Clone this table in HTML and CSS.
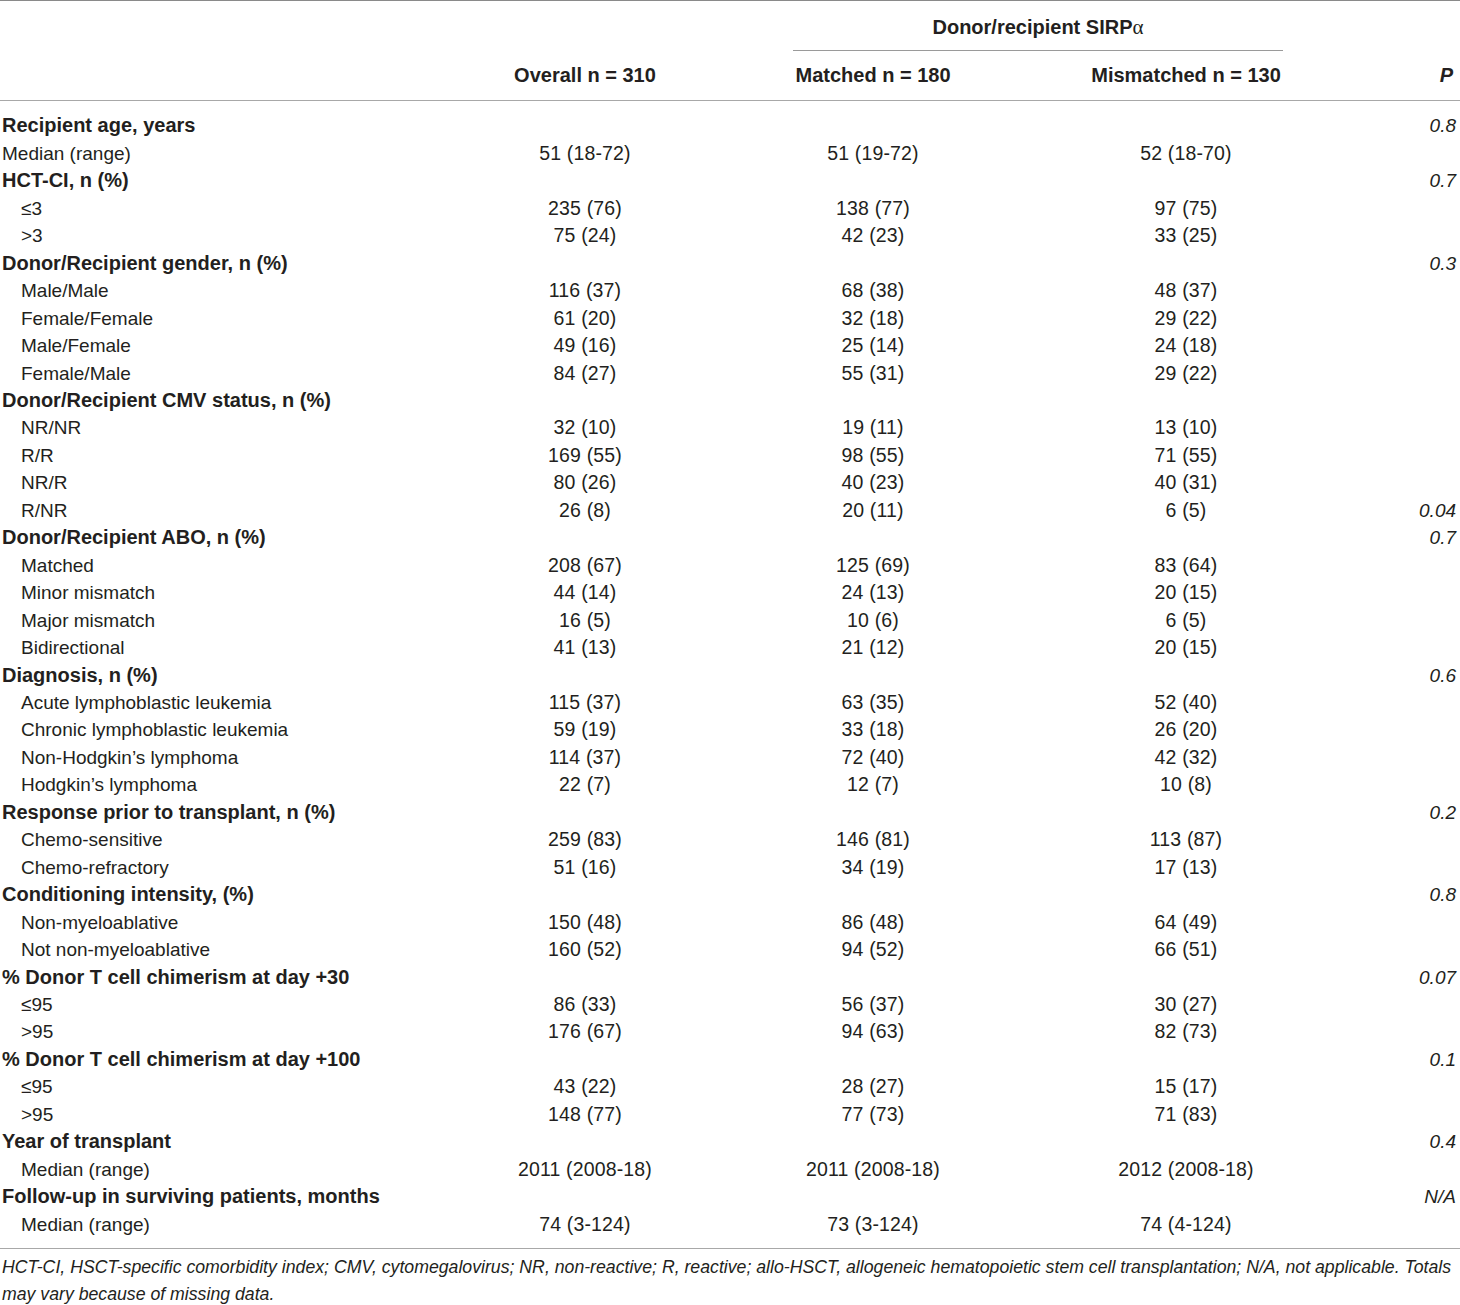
FILE: index.html
```html
<!DOCTYPE html>
<html lang="en">
<head>
<meta charset="utf-8">
<title>Patient characteristics</title>
<link rel="stylesheet" href="styles.css">
</head>
<body>
<table class="tbl">
  <colgroup>
    <col class="c-label">
    <col class="c-overall">
    <col class="c-matched">
    <col class="c-mism">
    <col class="c-p">
  </colgroup>
  <thead>
    <tr class="hrow1">
      <th></th>
      <th></th>
      <th colspan="2" class="span-h"><div class="span-inner">Donor/recipient SIRP<span class="alpha">α</span></div></th>
      <th></th>
    </tr>
    <tr class="hrow2">
      <th></th>
      <th class="num">Overall n = 310</th>
      <th class="num">Matched n = 180</th>
      <th class="num">Mismatched n = 130</th>
      <th class="pv">P</th>
    </tr>
  </thead>
  <tbody>
    <tr class="first"><td class="grp">Recipient age, years</td><td></td><td></td><td></td><td class="pv">0.8</td></tr>
    <tr><td class="sub0">Median (range)</td><td class="num">51 (18-72)</td><td class="num">51 (19-72)</td><td class="num">52 (18-70)</td><td class="pv"></td></tr>
    <tr><td class="grp">HCT-CI, n (%)</td><td></td><td></td><td></td><td class="pv">0.7</td></tr>
    <tr><td class="sub">≤3</td><td class="num">235 (76)</td><td class="num">138 (77)</td><td class="num">97 (75)</td><td class="pv"></td></tr>
    <tr><td class="sub">&gt;3</td><td class="num">75 (24)</td><td class="num">42 (23)</td><td class="num">33 (25)</td><td class="pv"></td></tr>
    <tr><td class="grp">Donor/Recipient gender, n (%)</td><td></td><td></td><td></td><td class="pv">0.3</td></tr>
    <tr><td class="sub">Male/Male</td><td class="num">116 (37)</td><td class="num">68 (38)</td><td class="num">48 (37)</td><td class="pv"></td></tr>
    <tr><td class="sub">Female/Female</td><td class="num">61 (20)</td><td class="num">32 (18)</td><td class="num">29 (22)</td><td class="pv"></td></tr>
    <tr><td class="sub">Male/Female</td><td class="num">49 (16)</td><td class="num">25 (14)</td><td class="num">24 (18)</td><td class="pv"></td></tr>
    <tr><td class="sub">Female/Male</td><td class="num">84 (27)</td><td class="num">55 (31)</td><td class="num">29 (22)</td><td class="pv"></td></tr>
    <tr><td class="grp">Donor/Recipient CMV status, n (%)</td><td></td><td></td><td></td><td class="pv"></td></tr>
    <tr><td class="sub">NR/NR</td><td class="num">32 (10)</td><td class="num">19 (11)</td><td class="num">13 (10)</td><td class="pv"></td></tr>
    <tr><td class="sub">R/R</td><td class="num">169 (55)</td><td class="num">98 (55)</td><td class="num">71 (55)</td><td class="pv"></td></tr>
    <tr><td class="sub">NR/R</td><td class="num">80 (26)</td><td class="num">40 (23)</td><td class="num">40 (31)</td><td class="pv"></td></tr>
    <tr><td class="sub">R/NR</td><td class="num">26 (8)</td><td class="num">20 (11)</td><td class="num">6 (5)</td><td class="pv">0.04</td></tr>
    <tr><td class="grp">Donor/Recipient ABO, n (%)</td><td></td><td></td><td></td><td class="pv">0.7</td></tr>
    <tr><td class="sub">Matched</td><td class="num">208 (67)</td><td class="num">125 (69)</td><td class="num">83 (64)</td><td class="pv"></td></tr>
    <tr><td class="sub">Minor mismatch</td><td class="num">44 (14)</td><td class="num">24 (13)</td><td class="num">20 (15)</td><td class="pv"></td></tr>
    <tr><td class="sub">Major mismatch</td><td class="num">16 (5)</td><td class="num">10 (6)</td><td class="num">6 (5)</td><td class="pv"></td></tr>
    <tr><td class="sub">Bidirectional</td><td class="num">41 (13)</td><td class="num">21 (12)</td><td class="num">20 (15)</td><td class="pv"></td></tr>
    <tr><td class="grp">Diagnosis, n (%)</td><td></td><td></td><td></td><td class="pv">0.6</td></tr>
    <tr><td class="sub">Acute lymphoblastic leukemia</td><td class="num">115 (37)</td><td class="num">63 (35)</td><td class="num">52 (40)</td><td class="pv"></td></tr>
    <tr><td class="sub">Chronic lymphoblastic leukemia</td><td class="num">59 (19)</td><td class="num">33 (18)</td><td class="num">26 (20)</td><td class="pv"></td></tr>
    <tr><td class="sub">Non-Hodgkin’s lymphoma</td><td class="num">114 (37)</td><td class="num">72 (40)</td><td class="num">42 (32)</td><td class="pv"></td></tr>
    <tr><td class="sub">Hodgkin’s lymphoma</td><td class="num">22 (7)</td><td class="num">12 (7)</td><td class="num">10 (8)</td><td class="pv"></td></tr>
    <tr><td class="grp">Response prior to transplant, n (%)</td><td></td><td></td><td></td><td class="pv">0.2</td></tr>
    <tr><td class="sub">Chemo-sensitive</td><td class="num">259 (83)</td><td class="num">146 (81)</td><td class="num">113 (87)</td><td class="pv"></td></tr>
    <tr><td class="sub">Chemo-refractory</td><td class="num">51 (16)</td><td class="num">34 (19)</td><td class="num">17 (13)</td><td class="pv"></td></tr>
    <tr><td class="grp">Conditioning intensity, (%)</td><td></td><td></td><td></td><td class="pv">0.8</td></tr>
    <tr><td class="sub">Non-myeloablative</td><td class="num">150 (48)</td><td class="num">86 (48)</td><td class="num">64 (49)</td><td class="pv"></td></tr>
    <tr><td class="sub">Not non-myeloablative</td><td class="num">160 (52)</td><td class="num">94 (52)</td><td class="num">66 (51)</td><td class="pv"></td></tr>
    <tr><td class="grp">% Donor T cell chimerism at day +30</td><td></td><td></td><td></td><td class="pv">0.07</td></tr>
    <tr><td class="sub">≤95</td><td class="num">86 (33)</td><td class="num">56 (37)</td><td class="num">30 (27)</td><td class="pv"></td></tr>
    <tr><td class="sub">&gt;95</td><td class="num">176 (67)</td><td class="num">94 (63)</td><td class="num">82 (73)</td><td class="pv"></td></tr>
    <tr><td class="grp">% Donor T cell chimerism at day +100</td><td></td><td></td><td></td><td class="pv">0.1</td></tr>
    <tr><td class="sub">≤95</td><td class="num">43 (22)</td><td class="num">28 (27)</td><td class="num">15 (17)</td><td class="pv"></td></tr>
    <tr><td class="sub">&gt;95</td><td class="num">148 (77)</td><td class="num">77 (73)</td><td class="num">71 (83)</td><td class="pv"></td></tr>
    <tr><td class="grp">Year of transplant</td><td></td><td></td><td></td><td class="pv">0.4</td></tr>
    <tr><td class="sub">Median (range)</td><td class="num">2011 (2008-18)</td><td class="num">2011 (2008-18)</td><td class="num">2012 (2008-18)</td><td class="pv"></td></tr>
    <tr><td class="grp">Follow-up in surviving patients, months</td><td></td><td></td><td></td><td class="pv">N/A</td></tr>
    <tr class="last"><td class="sub">Median (range)</td><td class="num">74 (3-124)</td><td class="num">73 (3-124)</td><td class="num">74 (4-124)</td><td class="pv"></td></tr>
  </tbody>
</table>
<p class="foot">HCT-CI, HSCT-specific comorbidity index; CMV, cytomegalovirus; NR, non-reactive; R, reactive; allo-HSCT, allogeneic hematopoietic stem cell transplantation; N/A, not applicable. Totals may vary because of missing data.</p>
</body>
</html>
```

FILE: styles.css
```css
html, body {
  margin: 0;
  padding: 0;
  background: #ffffff;
}

body {
  font-family: "Liberation Sans", Arial, sans-serif;
  color: #231f20;
  width: 1460px;
}

.tbl {
  width: 1460px;
  border-collapse: collapse;
  table-layout: fixed;
  font-size: 19px;
}

.c-label { width: 440px; }
.c-overall { width: 290px; }
.c-matched { width: 286px; }
.c-mism { width: 340px; }
.c-p { width: 104px; }

.tbl th,
.tbl td {
  padding: 0;
  line-height: 27.45px;
  white-space: nowrap;
  vertical-align: middle;
}

.tbl thead th {
  font-size: 20px;
}

.tbl thead tr.hrow1 th {
  border-top: 1px solid #8a8a8a;
  height: 49px;
  font-weight: bold;
}

.tbl thead tr.hrow2 th {
  height: 49px;
  border-bottom: 1px solid #a8a8a8;
  font-weight: bold;
}

.span-h {
  vertical-align: top;
}

.span-inner {
  margin: 13px 73px 0 63px;
  padding-bottom: 9px;
  border-bottom: 1px solid #9a9a9a;
  text-align: center;
}

.alpha {
  font-family: "Liberation Serif", "Times New Roman", serif;
  font-weight: normal;
  font-size: 21px;
}

.num {
  text-align: center;
}

td.num {
  font-size: 19.5px;
  letter-spacing: 0.15px;
}

.pv {
  text-align: right;
  font-style: italic;
  padding-right: 4px !important;
}

th.pv {
  font-weight: bold;
  padding-right: 7px !important;
}

.grp {
  font-weight: bold;
  font-size: 20px;
  padding-left: 2px !important;
}

.sub0 {
  padding-left: 2px !important;
}

.sub {
  padding-left: 21px !important;
}

.tbl tbody tr.first td {
  padding-top: 11px;
}

.tbl tbody tr.last td {
  padding-bottom: 10px;
  border-bottom: 1px solid #a8a8a8;
}

.foot {
  margin: 5px 0 0 0;
  padding: 0 0 0 2px;
  font-size: 17.7px;
  font-style: italic;
  line-height: 27px;
}
```
